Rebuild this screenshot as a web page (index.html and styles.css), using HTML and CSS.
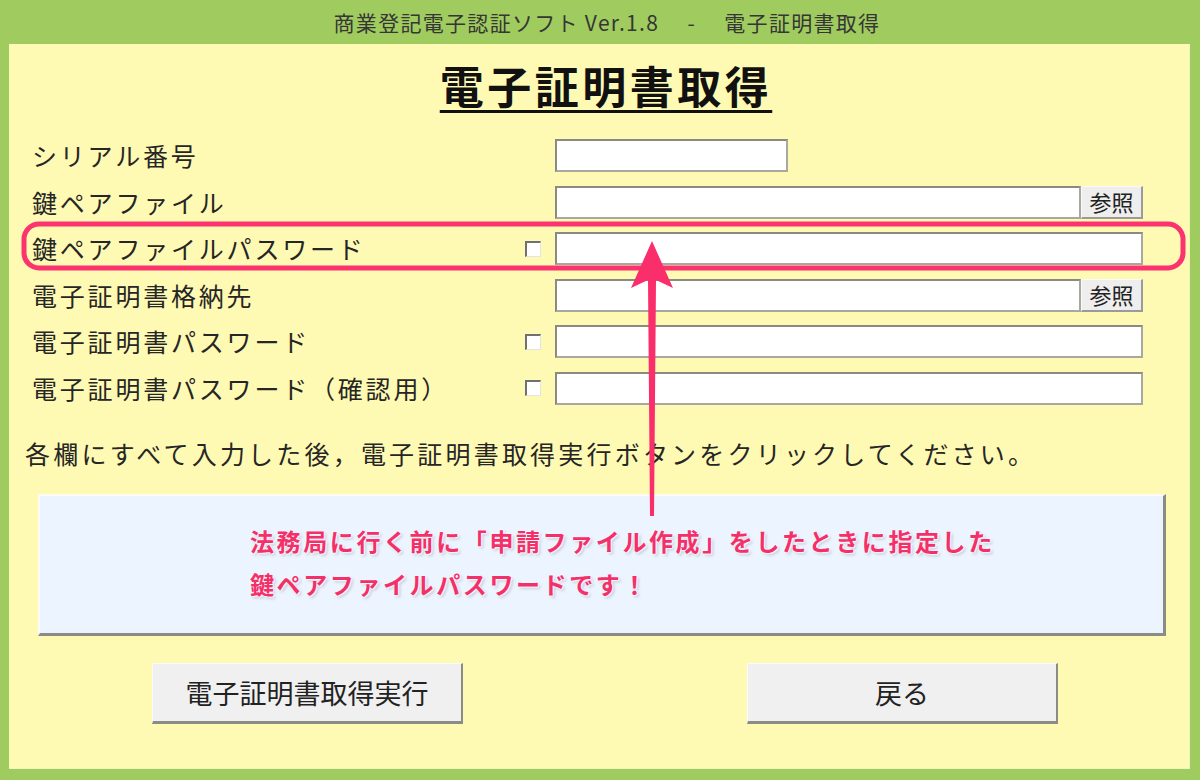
FILE: index.html
```html
<!DOCTYPE html>
<html lang="ja">
<head>
    <meta charset="UTF-8">
    <title>電子証明書取得</title>
    <link rel="stylesheet" href="styles.css">
</head>
<body>
    <div class="window">
        <div class="titlebar">商業登記電子認証ソフト Ver.1.8　 -　 電子証明書取得</div>

        <div class="panel">
            <h1>電子証明書取得</h1>

            <div class="form-grid">
                <div class="label">シリアル番号</div>
                <div class="check-cell"></div>
                <div class="field"><input type="text" class="input short"></div>

                <div class="label">鍵ペアファイル</div>
                <div class="check-cell"></div>
                <div class="field"><input type="text" class="input"><button class="ref-btn">参照</button></div>

                <div class="label">鍵ペアファイルパスワード</div>
                <div class="check-cell"><span class="check"></span></div>
                <div class="field"><input type="password" class="input"></div>

                <div class="label">電子証明書格納先</div>
                <div class="check-cell"></div>
                <div class="field"><input type="text" class="input"><button class="ref-btn">参照</button></div>

                <div class="label">電子証明書パスワード</div>
                <div class="check-cell"><span class="check"></span></div>
                <div class="field"><input type="password" class="input"></div>

                <div class="label">電子証明書パスワード（確認用）</div>
                <div class="check-cell"><span class="check"></span></div>
                <div class="field"><input type="password" class="input"></div>
            </div>

            <p class="notice">各欄にすべて入力した後，電子証明書取得実行ボタンをクリックしてください。</p>

            <div class="message-box">
                <p class="memo">法務局に行く前に「申請ファイル作成」をしたときに指定した</p>
                <p class="memo">鍵ペアファイルパスワードです！</p>
            </div>

            <div class="actions">
                <button class="big-btn">電子証明書取得実行</button>
                <button class="big-btn">戻る</button>
            </div>
        </div>

        <!-- annotation drawn over the form -->
        <svg class="annotation" width="1200" height="780" viewBox="0 0 1200 780">
            <rect x="24" y="224" width="1159" height="44" rx="15" fill="none" stroke="#fb336f" stroke-width="5"/>
            <path d="M652 241 L673 288 L656 280 L654 516 L650 516 L648 280 L631 288 Z" fill="#fb2e6c"/>
        </svg>
    </div>
</body>
</html>
```

FILE: styles.css
```css
:root {
    --frame: #a0cb5f;
    --panel: #fffab3;
    --text: #262626;
    --pink: #f4306b;
}

* {
    margin: 0;
    padding: 0;
    box-sizing: border-box;
}

body {
    background-color: var(--frame);
    font-family: "Noto Sans CJK JP", "Noto Sans", sans-serif;
    color: var(--text);
}

.window {
    position: relative;
    width: 1200px;
    height: 780px;
    display: flex;
    flex-direction: column;
}

.titlebar {
    height: 44px;
    line-height: 44px;
    text-align: center;
    font-size: 21px;
    letter-spacing: 1.3px;
    color: #363636;
    padding-left: 14px;
}

.panel {
    margin: 0 10px 11px 9px;
    flex: 1;
    background-color: var(--panel);
    border-right: 1px solid #eef6c0;
    border-bottom: 1px solid #eef6c0;
}

h1 {
    text-align: center;
    font-size: 44px;
    font-weight: bold;
    letter-spacing: 3.5px;
    line-height: 50px;
    margin-top: 16px;
    text-decoration: underline;
    text-decoration-thickness: 3px;
    text-underline-offset: 6px;
    color: #111;
    padding-left: 14px;
}

.form-grid {
    display: grid;
    grid-template-columns: 484px 39px 588px;
    grid-auto-rows: 33px;
    row-gap: 13.6px;
    padding-left: 23px;
    margin-top: 29px;
}

.label {
    font-size: 25px;
    letter-spacing: 2.8px;
    line-height: 33px;
    white-space: nowrap;
}

.check-cell {
    display: flex;
    align-items: center;
    padding-left: 9px;
}

.check {
    width: 16px;
    height: 16px;
    background-color: #fff;
    border-top: 2px solid #707070;
    border-left: 2px solid #707070;
    border-right: 1px solid #e4e4e4;
    border-bottom: 1px solid #e4e4e4;
}

.field {
    display: flex;
}

.input {
    flex: 1;
    height: 33px;
    background-color: #fff;
    border: 2px solid #8a8a80;
    border-right-color: #a8a8a0;
    border-bottom-color: #a8a8a0;
    outline: none;
}

.input.short {
    flex: none;
    width: 233px;
}

.ref-btn {
    width: 62px;
    height: 33px;
    font-family: inherit;
    font-size: 22px;
    line-height: 29px;
    color: #222;
    background-color: #eeeeee;
    border: 1px solid #fafafa;
    border-right: 2px solid #9a9a9a;
    border-bottom: 2px solid #9a9a9a;
}

.notice {
    font-size: 25px;
    letter-spacing: 3.2px;
    line-height: 34px;
    margin-top: 31px;
    padding-left: 16px;
    white-space: nowrap;
}

.message-box {
    margin: 24px 0 0 29px;
    width: 1128px;
    height: 142px;
    background-color: #ecf5ff;
    border: 2px solid #fbfbf4;
    border-right: 3px solid #8c8c86;
    border-bottom: 3px solid #8c8c86;
    padding: 23px 0 0 210px;
}

.memo {
    font-size: 24px;
    font-weight: bold;
    line-height: 43px;
    color: var(--pink);
    letter-spacing: 2.6px;
    text-shadow: 0 0 2px #fff, 1px 1px 2px #fff, 2px 2px 3px rgba(120, 120, 140, 0.45);
    white-space: nowrap;
}

.actions {
    display: flex;
    gap: 284px;
    padding-left: 143px;
    margin-top: 27px;
}

.big-btn {
    width: 311px;
    height: 61px;
    font-family: inherit;
    font-size: 27px;
    color: #222;
    background-color: #f0f0f0;
    border: 1px solid #fafafa;
    border-right: 2px solid #8c8c86;
    border-bottom: 3px solid #8c8c86;
}

.annotation {
    position: absolute;
    left: 0;
    top: 0;
    pointer-events: none;
}
```
